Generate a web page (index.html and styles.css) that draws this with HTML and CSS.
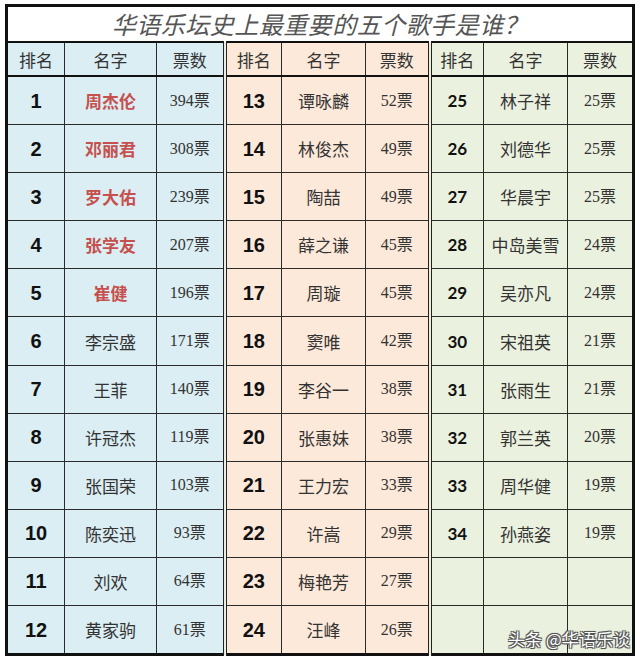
FILE: index.html
```html
<!DOCTYPE html>
<html lang="zh">
<head>
<meta charset="utf-8">
<link rel="stylesheet" href="styles.css">
</head>
<body>
<div class="wrap">
<table class="board">
<colgroup>
<col class="c1r"><col class="c1n"><col class="c1v">
<col class="c2r"><col class="c2n"><col class="c2v">
<col class="c3r"><col class="c3n"><col class="c3v">
</colgroup>
<tr class="title-row"><td colspan="9" class="title">华语乐坛史上最重要的五个歌手是谁？</td></tr>
<tr class="head-row">
<td class="g1">排名</td><td class="g1">名字</td><td class="g1">票数</td>
<td class="g2 sep">排名</td><td class="g2">名字</td><td class="g2">票数</td>
<td class="g3 sep">排名</td><td class="g3">名字</td><td class="g3">票数</td>
</tr>
<tr><td class="g1 rk">1</td><td class="g1 nm top">周杰伦</td><td class="g1 vt">394票</td><td class="g2 sep rk">13</td><td class="g2 nm">谭咏麟</td><td class="g2 vt">52票</td><td class="g3 sep rk3">25</td><td class="g3 nm">林子祥</td><td class="g3 vt">25票</td></tr>
<tr><td class="g1 rk">2</td><td class="g1 nm top">邓丽君</td><td class="g1 vt">308票</td><td class="g2 sep rk">14</td><td class="g2 nm">林俊杰</td><td class="g2 vt">49票</td><td class="g3 sep rk3">26</td><td class="g3 nm">刘德华</td><td class="g3 vt">25票</td></tr>
<tr><td class="g1 rk">3</td><td class="g1 nm top">罗大佑</td><td class="g1 vt">239票</td><td class="g2 sep rk">15</td><td class="g2 nm">陶喆</td><td class="g2 vt">49票</td><td class="g3 sep rk3">27</td><td class="g3 nm">华晨宇</td><td class="g3 vt">25票</td></tr>
<tr><td class="g1 rk">4</td><td class="g1 nm top">张学友</td><td class="g1 vt">207票</td><td class="g2 sep rk">16</td><td class="g2 nm">薛之谦</td><td class="g2 vt">45票</td><td class="g3 sep rk3">28</td><td class="g3 nm">中岛美雪</td><td class="g3 vt">24票</td></tr>
<tr><td class="g1 rk">5</td><td class="g1 nm top">崔健</td><td class="g1 vt">196票</td><td class="g2 sep rk">17</td><td class="g2 nm">周璇</td><td class="g2 vt">45票</td><td class="g3 sep rk3">29</td><td class="g3 nm">吴亦凡</td><td class="g3 vt">24票</td></tr>
<tr><td class="g1 rk">6</td><td class="g1 nm">李宗盛</td><td class="g1 vt">171票</td><td class="g2 sep rk">18</td><td class="g2 nm">窦唯</td><td class="g2 vt">42票</td><td class="g3 sep rk3">30</td><td class="g3 nm">宋祖英</td><td class="g3 vt">21票</td></tr>
<tr><td class="g1 rk">7</td><td class="g1 nm">王菲</td><td class="g1 vt">140票</td><td class="g2 sep rk">19</td><td class="g2 nm">李谷一</td><td class="g2 vt">38票</td><td class="g3 sep rk3">31</td><td class="g3 nm">张雨生</td><td class="g3 vt">21票</td></tr>
<tr><td class="g1 rk">8</td><td class="g1 nm">许冠杰</td><td class="g1 vt">119票</td><td class="g2 sep rk">20</td><td class="g2 nm">张惠妹</td><td class="g2 vt">38票</td><td class="g3 sep rk3">32</td><td class="g3 nm">郭兰英</td><td class="g3 vt">20票</td></tr>
<tr><td class="g1 rk">9</td><td class="g1 nm">张国荣</td><td class="g1 vt">103票</td><td class="g2 sep rk">21</td><td class="g2 nm">王力宏</td><td class="g2 vt">33票</td><td class="g3 sep rk3">33</td><td class="g3 nm">周华健</td><td class="g3 vt">19票</td></tr>
<tr><td class="g1 rk">10</td><td class="g1 nm">陈奕迅</td><td class="g1 vt">93票</td><td class="g2 sep rk">22</td><td class="g2 nm">许嵩</td><td class="g2 vt">29票</td><td class="g3 sep rk3">34</td><td class="g3 nm">孙燕姿</td><td class="g3 vt">19票</td></tr>
<tr><td class="g1 rk">11</td><td class="g1 nm">刘欢</td><td class="g1 vt">64票</td><td class="g2 sep rk">23</td><td class="g2 nm">梅艳芳</td><td class="g2 vt">27票</td><td class="g3 sep"></td><td class="g3"></td><td class="g3"></td></tr>
<tr><td class="g1 rk">12</td><td class="g1 nm">黄家驹</td><td class="g1 vt">61票</td><td class="g2 sep rk">24</td><td class="g2 nm">汪峰</td><td class="g2 vt">26票</td><td class="g3 sep"></td><td class="g3"></td><td class="g3"></td></tr>
</table>
<div class="mark">头条 @华语乐谈</div>
</div>
</body>
</html>
```

FILE: styles.css
```css
html, body {
  margin: 0;
  padding: 0;
  background: #ffffff;
}
.wrap {
  position: relative;
  width: 640px;
  height: 660px;
  padding: 4px 0 0 5px;
  box-sizing: border-box;
}
.board {
  border-collapse: collapse;
  table-layout: fixed;
  width: 630px;
  border: 3px solid #111;
  font-family: "Noto Sans CJK SC", sans-serif;
  color: #333;
}
.c1r { width: 58px; }
.c1n { width: 92px; }
.c1v { width: 68px; }
.c2r { width: 57px; }
.c2n { width: 84px; }
.c2v { width: 64px; }
.c3r { width: 54px; }
.c3n { width: 84px; }
.c3v { width: 66px; }
.board td {
  border: 1px solid #2a2a2a;
  text-align: center;
  vertical-align: middle;
  padding: 0;
  height: 47.1px;
  line-height: 1;
}
.title-row td {
  height: 34px;
  border-bottom: 2px solid #111;
}
.title {
  background: #ffffff;
  font-size: 24px;
  font-style: italic;
  font-weight: 400;
  color: #555;
  letter-spacing: 0.5px;
}
.head-row td {
  height: 32px;
  border-bottom: 2px solid #111;
  font-size: 17px;
  color: #333;
}
.g1 { background: #dbeef4; }
.g2 { background: #fde9da; }
.g3 { background: #ebf1df; }
.board td.sep { border-left: 4px double #222; }
.rk {
  font-family: "Liberation Sans", Arial, sans-serif;
  font-weight: 700;
  font-size: 20px;
  color: #111;
}
.rk3 {
  font-family: Lato, "Liberation Sans", sans-serif;
  font-weight: 700;
  font-size: 17px;
  color: #111;
}
.nm {
  font-size: 17px;
  color: #333;
}
.nm.top {
  color: #c5504e;
  font-weight: 700;
}
.vt {
  font-family: "Liberation Serif", "Noto Sans CJK SC", serif;
  font-size: 16px;
  color: #333;
}
.mark {
  position: absolute;
  left: 508px;
  top: 626px;
  font-family: "Noto Sans CJK SC", sans-serif;
  font-size: 17px;
  color: #ffffff;
  text-shadow: 1px 1px 0 #555, -1px -1px 0 #555, 1px -1px 0 #555, -1px 1px 0 #555, 0 0 2px #333;
  white-space: nowrap;
}
```
